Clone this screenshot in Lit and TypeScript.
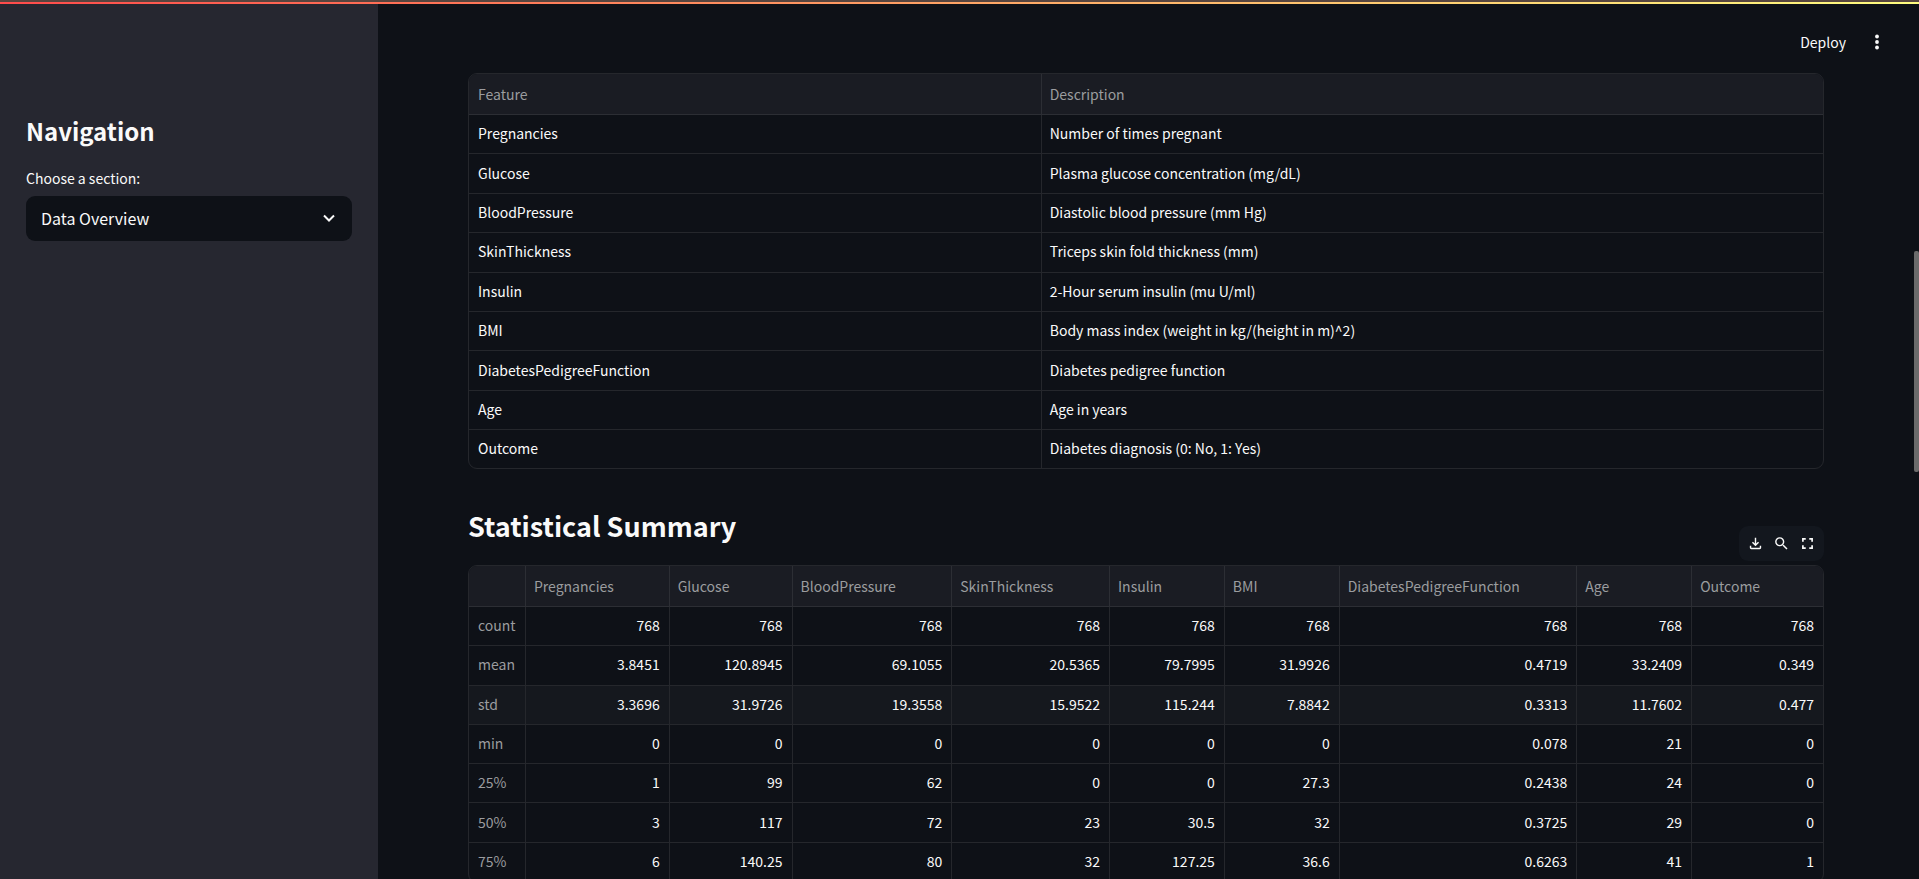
import { LitElement, html, css, svg } from "lit";
import { customElement } from "lit/decorators.js";

const FEATURES: [string, string][] = [
  ["Pregnancies", "Number of times pregnant"],
  ["Glucose", "Plasma glucose concentration (mg/dL)"],
  ["BloodPressure", "Diastolic blood pressure (mm Hg)"],
  ["SkinThickness", "Triceps skin fold thickness (mm)"],
  ["Insulin", "2-Hour serum insulin (mu U/ml)"],
  ["BMI", "Body mass index (weight in kg/(height in m)^2)"],
  ["DiabetesPedigreeFunction", "Diabetes pedigree function"],
  ["Age", "Age in years"],
  ["Outcome", "Diabetes diagnosis (0: No, 1: Yes)"],
];

const STATS: [string, string[]][] = [
  ["count", ["768", "768", "768", "768", "768", "768", "768", "768", "768"]],
  ["mean", ["3.8451", "120.8945", "69.1055", "20.5365", "79.7995", "31.9926", "0.4719", "33.2409", "0.349"]],
  ["std", ["3.3696", "31.9726", "19.3558", "15.9522", "115.244", "7.8842", "0.3313", "11.7602", "0.477"]],
  ["min", ["0", "0", "0", "0", "0", "0", "0.078", "21", "0"]],
  ["25%", ["1", "99", "62", "0", "0", "27.3", "0.2438", "24", "0"]],
  ["50%", ["3", "117", "72", "23", "30.5", "32", "0.3725", "29", "0"]],
  ["75%", ["6", "140.25", "80", "32", "127.25", "36.6", "0.6263", "41", "1"]],
];

/* Shares of the table width, index column first. */
const COLS = [57, 144, 123, 160, 158, 115, 115, 238, 115, 131];
const TOTAL = COLS.reduce((a, b) => a + b, 0);
const ACTIVE_ROW = "std";

@customElement("data-grid")
export class DataGrid extends LitElement {
  static properties = { kind: { type: String } };
  declare kind: string;

  static styles = css`
    :host {
      display: block;
      border: 1px solid #25272c;
      border-radius: 9px;
      overflow: hidden;
    }
    table {
      width: 100%;
      table-layout: fixed;
      border-collapse: separate;
      border-spacing: 0;
      font-size: 14px;
      line-height: 20px;
      color: #fafafa;
    }
    .features { height: 394px; }
    .stats { height: 316px; }
    .name { width: 42.3%; }
    th, td {
      box-sizing: border-box;
      padding: 0 9px 2px;
      text-align: left;
      font-weight: 400;
      white-space: nowrap;
      border-right: 1px solid #25272c;
      border-bottom: 1px solid #25272c;
    }
    th:last-child, td:last-child { border-right: none; }
    .features tbody tr:last-child td { border-bottom: none; }
    thead th {
      height: 41px;
      padding: 0 8px;
      background: #1a1c23;
      color: #9b9c9f;
      border-color: #2c2e34;
    }
    .features thead th:first-child { padding-left: 9px; }
    .features td:last-child { padding-left: 8px; }
    tbody th { color: #9b9c9f; }
    .stats td { text-align: right; }
    .active th, .active td { background: #15181e; }
  `;

  render() {
    return this.kind === "features"
      ? html`<table class="features">
          <thead><tr><th class="name" scope="col">Feature</th><th scope="col">Description</th></tr></thead>
          <tbody>
            ${FEATURES.map(([n, d]) => html`<tr><td>${n}</td><td>${d}</td></tr>`)}
          </tbody>
        </table>`
      : html`<table class="stats">
          <colgroup>${COLS.map((c) => html`<col style="width:${(c / TOTAL) * 100}%">`)}</colgroup>
          <thead><tr><th></th>${FEATURES.map(([n]) => html`<th scope="col">${n}</th>`)}</tr></thead>
          <tbody>
            ${STATS.map(([n, v]) => html`<tr class=${n === ACTIVE_ROW ? "active" : ""}>
              <th scope="row">${n}</th>${v.map((x) => html`<td>${x}</td>`)}
            </tr>`)}
          </tbody>
        </table>`;
  }
}

const icon = (d: string) => svg`<path d=${d}></path>`;
const DOWNLOAD = "M18 15v3H6v-3H4v3c0 1.100.9 2 2 2h12c1.100 0 2-.9 2-2v-3h-2zm-1-4-1.410-1.410L13 12.170V4h-2v8.170L8.410 9.590 7 11l5 5 5-5z";
const SEARCH = "M15.500 14h-.79l-.28-.27A6.471 6.471 0 0 0 16 9.500 6.500 6.500 0 1 0 9.500 16c1.610 0 3.090-.59 4.230-1.570l.27.28v.79l5 4.990L20.490 19l-4.990-5zm-6 0C7.010 14 5 11.990 5 9.500S7.010 5 9.500 5 14 7.010 14 9.500 11.990 14 9.500 14z";
const FULLSCREEN = "M5.500 9.500v-4h4M14.500 5.500h4v4M18.500 14.500v4h-4M9.500 18.500h-4v-4";

@customElement("app-root")
export class AppRoot extends LitElement {
  static styles = css`
    :host {
      display: flex;
      position: relative;
      height: 100vh;
      overflow: hidden;
      background: #0e1117;
      color: #fafafa;
      font-family: "Noto Sans CJK SC", "Source Sans Pro", sans-serif;
    }
    .decoration {
      position: absolute;
      inset: 0 0 auto 0;
      height: 2px;
      border-top: 2px solid #57453f;
      background: linear-gradient(90deg, #ff4b4b, #fffd80);
    }
    .sidebar {
      flex: none;
      box-sizing: border-box;
      width: 378px;
      padding: 111px 26px 0;
      background: #262730;
    }
    h2 {
      margin: 0;
      font-size: 24px;
      line-height: 40px;
      font-weight: 600;
    }
    label {
      display: block;
      margin-top: 15px;
      font-size: 14px;
      line-height: 24px;
    }
    .picker {
      display: grid;
      align-items: center;
      margin-top: 6px;
    }
    .picker > * { grid-area: 1 / 1; }
    select {
      appearance: none;
      width: 100%;
      height: 45px;
      padding: 0 15px 2px;
      border: none;
      border-radius: 9px;
      background: #0e1117;
      color: inherit;
      font: inherit;
      font-size: 16px;
    }
    .chevron {
      justify-self: end;
      margin: 0 12px 2px 0;
      pointer-events: none;
    }
    main {
      flex: 1;
      min-width: 0;
      padding: 0 95px 0 90px;
    }
    header {
      display: flex;
      justify-content: flex-end;
      align-items: center;
      gap: 18px;
      height: 57px;
      margin-right: -66px;
      padding: 13px 0 1px;
    }
    header + data-grid { margin-top: 2px; }
    button {
      display: flex;
      align-items: center;
      justify-content: center;
      padding: 0;
      border: none;
      background: none;
      color: inherit;
      font: inherit;
      font-size: 14px;
      line-height: 24px;
    }
    .menu { width: 26px; height: 26px; }
    .title {
      display: flex;
      justify-content: space-between;
      align-items: flex-end;
      margin: 35px 0 4px;
      height: 57px;
    }
    h1 {
      margin: 0;
      font-size: 27px;
      line-height: 44px;
      font-weight: 600;
      align-self: flex-start;
    }
    .toolbar {
      display: flex;
      align-items: center;
      gap: 8px;
      height: 35px;
      padding: 0 8px 0 7px;
      border-radius: 9px;
      background: #13171e;
    }
    .toolbar button { width: 18px; height: 18px; }
    .scrollbar {
      position: absolute;
      top: 251px;
      right: 0;
      width: 5px;
      height: 221px;
      border-radius: 2px;
      background: #6b6b6b;
    }
    svg { display: block; fill: currentColor; }
    .line { fill: none; stroke: currentColor; stroke-width: 2; }
    .heavy { stroke-width: 2.4; }
  `;

  render() {
    return html`
      <aside class="sidebar">
        <h2>Navigation</h2>
        <label for="section">Choose a section:</label>
        <div class="picker">
          <select id="section"><option>Data Overview</option></select>
          <svg class="chevron line" width="22" height="22" viewBox="0 0 22 22"><path d="M6 8.500l5 5 5-5"></path></svg>
        </div>
      </aside>
      <main>
        <header>
          <button>Deploy</button>
          <button class="menu" aria-label="Main menu">
            <svg width="22" height="22" viewBox="0 0 22 22"><circle cx="11" cy="5.500" r="1.900"></circle><circle cx="11" cy="11" r="1.900"></circle><circle cx="11" cy="16.500" r="1.900"></circle></svg>
          </button>
        </header>
        <data-grid kind="features"></data-grid>
        <div class="title">
          <h1>Statistical Summary</h1>
          <div class="toolbar">
            <button aria-label="Download"><svg width="17" height="17" viewBox="0 0 24 24">${icon(DOWNLOAD)}</svg></button>
            <button aria-label="Search"><svg width="17" height="17" viewBox="0 0 24 24">${icon(SEARCH)}</svg></button>
            <button aria-label="Fullscreen"><svg class="line heavy" width="17" height="17" viewBox="0 0 24 24">${icon(FULLSCREEN)}</svg></button>
          </div>
        </div>
        <data-grid kind="stats"></data-grid>
      </main>
      <div class="decoration"></div>
      <div class="scrollbar"></div>
    `;
  }
}
